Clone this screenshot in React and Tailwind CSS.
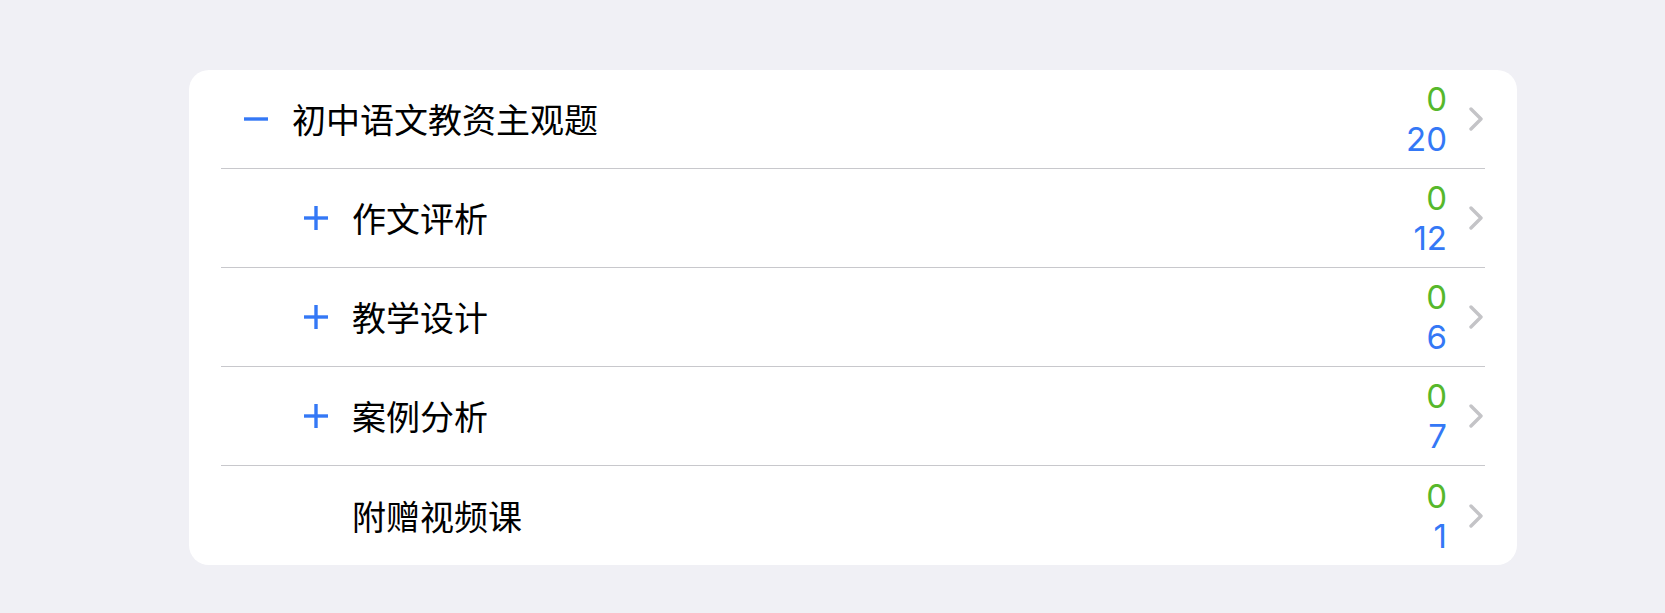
import React from 'react';

const rows = [
  { title: '初中语文教资主观题', level: 0, icon: 'minus', done: 0, total: 20 },
  { title: '作文评析', level: 1, icon: 'plus', done: 0, total: 12 },
  { title: '教学设计', level: 1, icon: 'plus', done: 0, total: 6 },
  { title: '案例分析', level: 1, icon: 'plus', done: 0, total: 7 },
  { title: '附赠视频课', level: 1, icon: null, done: 0, total: 1 },
];

function ToggleIcon({ type }) {
  if (!type) return <span className="w-[24px] shrink-0" />;
  return (
    <svg width="24" height="24" viewBox="0 0 24 24" className="shrink-0">
      <rect x="0" y="10.3" width="24" height="3.4" fill="#3478f6" />
      {type === 'plus' && <rect x="10.3" y="0" width="3.4" height="24" fill="#3478f6" />}
    </svg>
  );
}

function Chevron() {
  return (
    <svg width="14" height="24" viewBox="0 0 14 24" className="shrink-0">
      <polyline
        points="2,2 12,12 2,22"
        fill="none"
        stroke="#c4c4c7"
        strokeWidth="3.4"
        strokeLinecap="round"
        strokeLinejoin="round"
      />
    </svg>
  );
}

export default function App() {
  return (
    <div
      className="min-h-[613px] bg-[#f0f0f5] pt-[70px] pl-[189px]"
      style={{ fontFamily: '"Noto Sans CJK SC", "Noto Sans", sans-serif' }}
    >
      <div className="w-[1328px] rounded-[20px] bg-white px-[32px]">
        {rows.map((row, i) => (
          <div
            key={row.title}
            className={
              'flex h-[99px] items-center ' +
              (i < rows.length - 1 ? 'border-b border-[#c8c8cc]' : 'h-[98px]')
            }
          >
            <div className={'flex flex-1 items-center gap-[24px] ' + (row.level ? 'pl-[83px]' : 'pl-[23px]')}>
              <ToggleIcon type={row.icon} />
              <span className="text-[34px] leading-none text-black">{row.title}</span>
            </div>
            <div
              className="flex flex-col items-end text-[33px] leading-[40px]"
              style={{ fontFamily: 'Inter, "Liberation Sans", sans-serif' }}
            >
              <span className="text-[#56b82c]">{row.done}</span>
              <span className="text-[#3478f6]">{row.total}</span>
            </div>
            <div className="ml-[22px] mr-[2px] flex">
              <Chevron />
            </div>
          </div>
        ))}
      </div>
    </div>
  );
}
